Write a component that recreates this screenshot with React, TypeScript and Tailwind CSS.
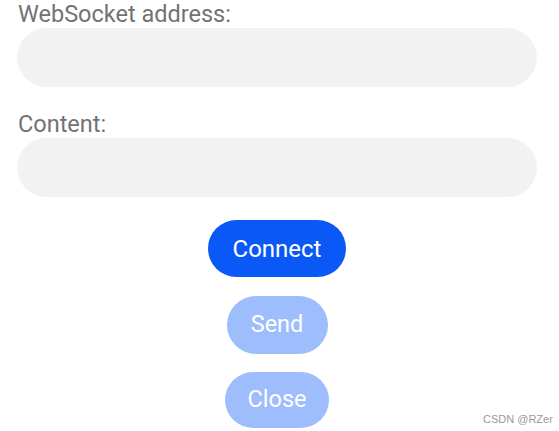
export default function App() {
  return (
    <div className="relative w-[559px] h-[431px] bg-white overflow-hidden" style={{ fontFamily: "Roboto, 'Noto Sans', sans-serif" }}>
      <div className="flex flex-col pl-[17px] w-[537px]">
        <label className="pl-px text-[23.5px] leading-[28px] text-[#737373]">WebSocket address:</label>
        <div className="h-[59px] rounded-full bg-[#f2f2f2]" />
        <label className="pl-px mt-[23px] text-[23.5px] leading-[28px] text-[#737373]">Content:</label>
        <div className="h-[59px] rounded-full bg-[#f2f2f2]" />
      </div>
      <div className="flex flex-col items-center w-[554px] mt-[23px]">
        <button className="w-[138px] h-[57px] rounded-full bg-[#0a59f7] text-white text-[24px]">Connect</button>
        <button className="mt-[19px] w-[101px] h-[58px] rounded-full bg-[#9dbdfc] text-white text-[23.5px]">Send</button>
        <button className="mt-[18px] w-[104px] h-[56px] rounded-full bg-[#9dbdfc] text-white text-[23.5px]">Close</button>
      </div>
      <span className="absolute left-[483px] top-[411px] text-[11px] text-[#9a9a9a] whitespace-nowrap" style={{ fontFamily: "'Liberation Sans', Arial, sans-serif" }}>CSDN @RZer</span>
    </div>
  );
}
